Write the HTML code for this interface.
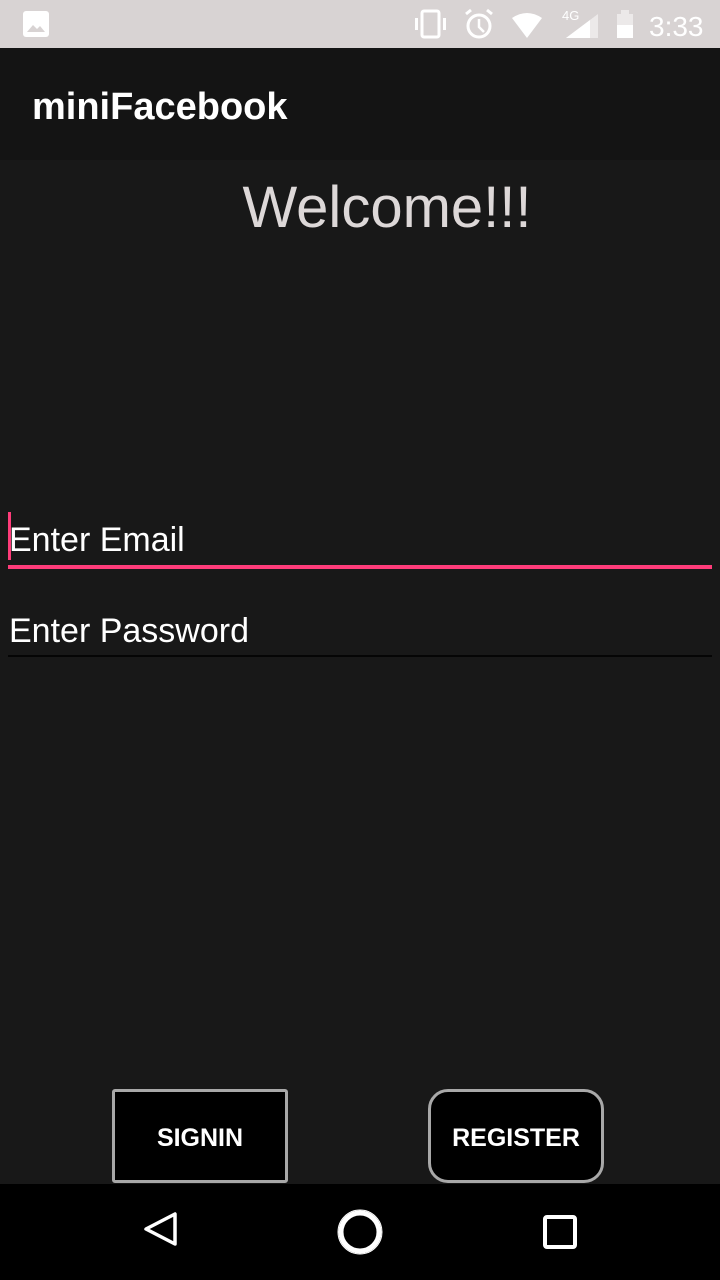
<!DOCTYPE html>
<html><head><meta charset="utf-8"><style>
html,body{margin:0;padding:0;}
body{width:720px;height:1280px;background:#181818;position:relative;overflow:hidden;font-family:"Liberation Sans",Roboto,sans-serif;}
.sb{position:absolute;left:0;top:0;width:720px;height:48px;background:#d8d3d3;}
.ab{position:absolute;left:0;top:48px;width:720px;height:112px;background:#141414;}
.ab span{position:absolute;left:32px;top:38px;color:#fff;font-size:38px;font-weight:bold;}
.wel{position:absolute;left:0;width:774px;text-align:center;top:174px;color:#ddd8d8;font-size:58px;}
.in{position:absolute;left:9px;color:#fff;font-size:34px;}
.line{position:absolute;left:8px;width:704px;}
.btn{position:absolute;top:1089px;height:94px;background:#000;border:3px solid #a8a8a8;color:#fff;font-size:25px;font-weight:600;display:flex;align-items:center;justify-content:center;box-sizing:border-box;padding-top:4px;}
.nav{position:absolute;left:0;top:1184px;width:720px;height:96px;background:#000;}
</style></head><body>
<div class="sb">
<svg width="720" height="48" style="position:absolute;left:0;top:0">
<rect x="23" y="11" width="26" height="26" rx="3" fill="#fff"/>
<path d="M27 32 L33 25 L37 29 L40 26 L45 32 Z" fill="#d8d3d3"/>
<rect x="422" y="11" width="17" height="26" rx="2" fill="none" stroke="#fff" stroke-width="3"/>
<rect x="415" y="18" width="3" height="12" fill="#fff"/><rect x="443" y="18" width="3" height="12" fill="#fff"/>
<circle cx="479" cy="26" r="11" fill="none" stroke="#fff" stroke-width="3"/>
<path d="M479 19 V27 L484 32" stroke="#fff" stroke-width="2.5" fill="none"/>
<path d="M466 14 L471 10 M492 14 L487 10" stroke="#fff" stroke-width="3"/>
<path d="M512 18 Q527 8 542 18 L527 38 Z" fill="#fff"/>
<path d="M566 38 L598 38 L598 14 Z" fill="#fff" opacity="0.5"/>
<path d="M566 38 L590 38 L590 20 Z" fill="#fff"/>
<text x="562" y="20" font-size="13" fill="#fff" font-family="Liberation Sans">4G</text>
<rect x="617" y="14" width="16" height="24" fill="#fff" opacity="0.5"/>
<rect x="621" y="10" width="8" height="4" fill="#fff" opacity="0.5"/>
<rect x="617" y="25" width="16" height="13" fill="#fff"/>
<text x="649" y="36" font-size="28" fill="#fff" font-family="Liberation Sans">3:33</text>
</svg></div>
<div class="ab"><span>miniFacebook</span></div>
<div class="wel">Welcome!!!</div>
<div style="position:absolute;left:8px;top:512px;width:3px;height:48px;background:#ff3c7a"></div>
<div class="in" style="top:521px">Enter Email</div>
<div class="line" style="top:565px;height:4px;background:#ff3c7a"></div>
<div class="in" style="top:612px">Enter Password</div>
<div class="line" style="top:655px;height:2px;background:#050505"></div>
<div class="btn" style="left:112px;width:176px;border-radius:3px">SIGNIN</div>
<div class="btn" style="left:428px;width:176px;border-radius:20px">REGISTER</div>
<div class="nav">
<svg width="720" height="96" style="position:absolute;left:0;top:0">
<path d="M175 30 L175 60 L146 45 Z" fill="none" stroke="#fff" stroke-width="3.5" stroke-linejoin="round"/>
<circle cx="360" cy="48" r="19" fill="none" stroke="#fff" stroke-width="5"/>
<circle cx="360" cy="48" r="22" fill="none" stroke="#fff" stroke-width="1"/>
<rect x="545" y="33" width="30" height="30" rx="2" fill="none" stroke="#fff" stroke-width="4"/>
</svg></div>
</body></html>
